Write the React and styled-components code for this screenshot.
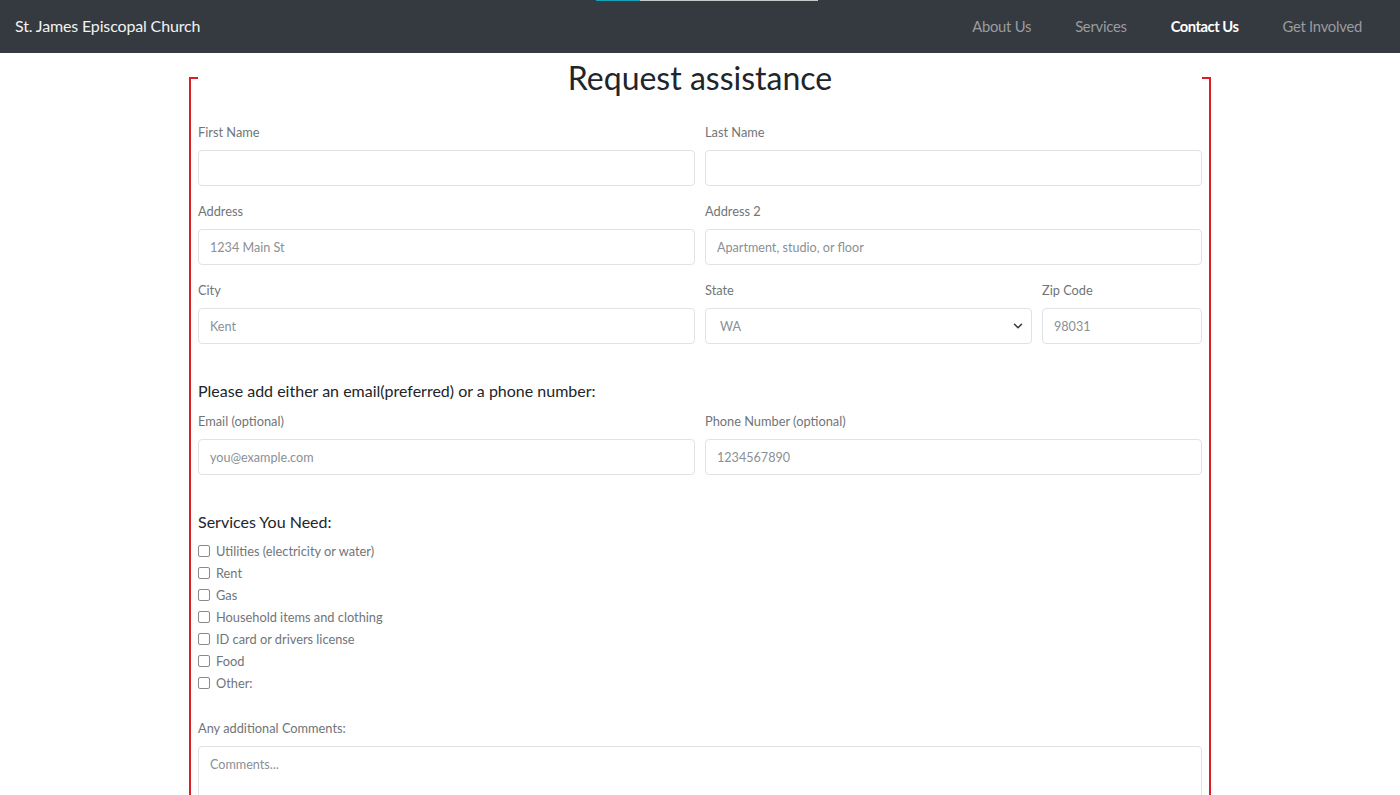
import React from 'react';
import styled, { createGlobalStyle } from 'styled-components';
import { ChevronDown } from 'lucide-react';

const GlobalStyle = createGlobalStyle`
    * { box-sizing: border-box; }
    body {
        margin: 0;
        background: #fff;
        font-family: Lato, "Open Sans", sans-serif;
        color: #212529;
    }
`;

const links = ['About Us', 'Services', 'Contact Us', 'Get Involved'];

const services = [
    'Utilities (electricity or water)',
    'Rent',
    'Gas',
    'Household items and clothing',
    'ID card or drivers license',
    'Food',
    'Other:'
];

const Field = ({ label, placeholder, type = 'text' }) => (
    <Group>
        <Label>{label}</Label>
        <Input type={type} placeholder={placeholder} />
    </Group>
);

export default function App() {
    return (
        <>
            <GlobalStyle />
            <Navbar>
                <Progress>
                    <ProgressFill />
                </Progress>
                <Brand>St. James Episcopal Church</Brand>
                <Nav>
                    {links.map((link) => (
                        <NavLink key={link} active={link === 'Contact Us'}>{link}</NavLink>
                    ))}
                </Nav>
            </Navbar>

            <Container>
                <Frame>
                    <Legend>Request assistance</Legend>

                    <Row>
                        <Field label="First Name" />
                        <Field label="Last Name" />
                    </Row>
                    <Row>
                        <Field label="Address" placeholder="1234 Main St" />
                        <Field label="Address 2" placeholder="Apartment, studio, or floor" />
                    </Row>
                    <Row>
                        <Field label="City" placeholder="Kent" />
                        <SubRow>
                            <Group>
                                <Label>State</Label>
                                <SelectWrap>
                                    <Select defaultValue="WA">
                                        <option>WA</option>
                                        <option>OR</option>
                                        <option>ID</option>
                                    </Select>
                                    <Chevron size={14} strokeWidth={2.5} />
                                </SelectWrap>
                            </Group>
                            <Field label="Zip Code" placeholder="98031" />
                        </SubRow>
                    </Row>

                    <Heading>Please add either an email(preferred) or a phone number:</Heading>
                    <Row>
                        <Field label="Email (optional)" type="email" placeholder="you@example.com" />
                        <Field label="Phone Number (optional)" type="tel" placeholder="1234567890" />
                    </Row>

                    <Heading>Services You Need:</Heading>
                    <Checks>
                        {services.map((s) => (
                            <Check key={s}>
                                <Box type="checkbox" />
                                <span>{s}</span>
                            </Check>
                        ))}
                    </Checks>

                    <Group>
                        <Label>Any additional Comments:</Label>
                        <Comments rows={4} placeholder="Comments..." />
                    </Group>
                    <Submit>Submit</Submit>
                </Frame>
            </Container>
        </>
    );
}

const Navbar = styled.header`
    position: relative;
    height: 53px;
    background: #343a40;
    display: flex;
    align-items: center;
    justify-content: space-between;
    padding: 0 16px 2px 15px;
`;

const Progress = styled.div`
    position: absolute;
    top: 0;
    left: 596px;
    width: 222px;
    height: 1px;
    background: #c8c9ca;
`;

const ProgressFill = styled.div`
    width: 44px;
    height: 100%;
    background: #17a2b8;
`;

const Brand = styled.div`
    font-size: 16px;
    color: #f2f2f2;
    letter-spacing: -0.15px;
`;

const Nav = styled.nav`
    display: flex;
`;

const NavLink = styled.a`
    padding: 0 22px;
    font-size: 14.8px;
    letter-spacing: ${(p) => (p.active ? '-0.5px' : '-0.25px')};
    font-weight: ${(p) => (p.active ? 700 : 400)};
    color: ${(p) => (p.active ? '#ffffff' : '#9a9c9f')};
    cursor: pointer;
`;

const Container = styled.main`
    width: 1022px;
    margin: 0 auto;
`;

const Frame = styled.fieldset`
    margin: 0;
    padding: 0 7px 40px;
    border: 2px solid #dc1f26;
    min-width: 0;
`;

const Legend = styled.legend`
    width: 100%;
    padding: 0;
    text-align: center;
    font-size: 32px;
    line-height: 50px;
    color: #212529;
`;

const Row = styled.div`
    display: grid;
    grid-template-columns: 1fr 1fr;
    gap: 10px;
    margin-top: 17px;
    & + & {
        margin-top: 13px;
    }
`;

const SubRow = styled.div`
    display: grid;
    grid-template-columns: 1fr 160px;
    gap: 10px;
`;

const Group = styled.div`
    display: flex;
    flex-direction: column;
`;

const Label = styled.label`
    font-size: 12.8px;
    line-height: 24px;
    color: #70757a;
    margin-bottom: 6px;
`;

const inputBase = `
    font-family: Lato, "Open Sans", sans-serif;
    font-size: 12.6px;
    color: #495057;
    background: #fff;
    border: 1px solid #dfe2e6;
    border-radius: 4px;
    padding: 0 11px;
    outline: none;
    width: 100%;
    &::placeholder {
        color: #8a9095;
    }
`;

const Input = styled.input`
    ${inputBase}
    height: 36px;
`;

const SelectWrap = styled.div`
    position: relative;
`;

const Select = styled.select`
    ${inputBase}
    height: 36px;
    padding-left: 14px;
    appearance: none;
    color: #8a9095;
`;

const Chevron = styled(ChevronDown)`
    position: absolute;
    right: 7px;
    top: 11px;
    color: #333;
    pointer-events: none;
`;

const Comments = styled.textarea`
    ${inputBase}
    padding: 10px 11px;
    resize: vertical;
`;

const Heading = styled.h3`
    margin: 35px 0 0;
    font-size: 16px;
    line-height: 23px;
    font-weight: 400;
    color: #212529;
    & + ${Row} {
        margin-top: 7px;
    }
`;

const Checks = styled.div`
    display: flex;
    flex-direction: column;
    margin: 7px 0 22px;
`;

const Check = styled.label`
    display: flex;
    align-items: center;
    height: 22px;
    font-size: 12.8px;
    color: #70757a;
`;

const Box = styled.input`
    appearance: none;
    width: 12px;
    height: 12px;
    margin: 0 6px 0 0;
    border: 1px solid #8a8a8a;
    border-radius: 2px;
    background: #fff;
`;

const Submit = styled.button`
    margin-top: 20px;
    align-self: flex-start;
    padding: 8px 20px;
    font-family: Lato, sans-serif;
    font-size: 15px;
    color: #fff;
    background: #343a40;
    border: none;
    border-radius: 4px;
`;
